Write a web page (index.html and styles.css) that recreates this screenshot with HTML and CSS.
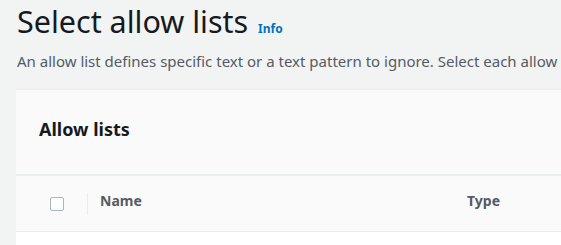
FILE: index.html
```html
<!DOCTYPE html>
<html>
<head>
<meta charset="utf-8">
<link rel="stylesheet" href="styles.css">
</head>
<body>
<div class="page">
  <header class="page-header">
    <h1 class="title">Select allow lists <a class="info" href="#">Info</a></h1>
    <p class="desc">An allow list defines specific text or a text pattern to ignore. Select each allow list that you want the job to use.</p>
  </header>
  <section class="card">
    <div class="card-header">
      <h2 class="card-title">Allow lists</h2>
    </div>
    <div class="table-head">
      <div class="cell-check"><span class="checkbox"></span></div>
      <div class="sep"></div>
      <div class="col col-name">Name</div>
      <div class="col col-type">Type</div>
    </div>
    <div class="table-body"></div>
  </section>
</div>
</body>
</html>
```
FILE: styles.css
```css
html, body {
  margin: 0;
  padding: 0;
  background: #f2f3f3;
  overflow: hidden;
  font-family: "Noto Sans", "Open Sans", sans-serif;
}
.page {
  width: 561px;
  height: 245px;
  overflow: hidden;
}
.page-header {
  padding-left: 17px;
}
.title {
  margin: 0;
  padding-top: 1px;
  height: 41px;
  font-size: 30.5px;
  font-weight: 400;
  line-height: 40px;
  color: #16191f;
  white-space: nowrap;
  box-sizing: border-box;
}
.info {
  font-size: 12px;
  line-height: 12px;
  font-weight: 700;
  color: #0073bb;
  text-decoration: none;
  margin-left: 2px;
}
.desc {
  margin: 10px 0 0 0;
  font-size: 15px;
  line-height: 20px;
  color: #545b64;
  white-space: nowrap;
  overflow: hidden;
}
.card {
  margin-top: 18px;
  margin-left: 16px;
  width: 700px;
  background: #fafafa;
  border-top: 1px solid #eaeded;
}
.card-header {
  height: 86px;
  padding-top: 27px;
  padding-left: 23px;
  border-bottom: 2px solid #eaeded;
  box-sizing: border-box;
}
.card-title {
  margin: 0;
  font-size: 18px;
  font-weight: 700;
  color: #16191f;
  line-height: 24px;
}
.table-head {
  height: 56px;
  display: flex;
  align-items: center;
  border-bottom: 1px solid #eaeded;
  box-sizing: border-box;
}
.cell-check {
  width: 71px;
  display: flex;
  padding-left: 34px;
  box-sizing: border-box;
}
.checkbox {
  width: 14px;
  height: 14px;
  box-sizing: border-box;
  border: 1px solid #aab7b8;
  border-radius: 2px;
  background: #fff;
  margin-top: 1px;
}
.sep {
  width: 1px;
  height: 22px;
  background: #eaeded;
}
.col {
  font-size: 14px;
  font-weight: 700;
  color: #545b64;
  padding-bottom: 6px;
}
.col-name {
  margin-left: 12px;
  width: 367px;
}
.table-body {
  height: 40px;
  background: #fff;
}
```
